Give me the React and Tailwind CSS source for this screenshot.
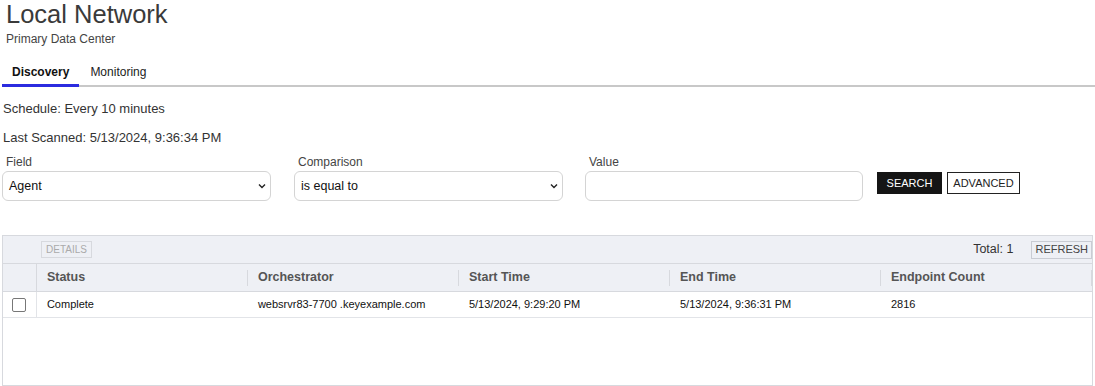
import React from 'react'

const columns = ['Status', 'Orchestrator', 'Start Time', 'End Time', 'Endpoint Count']

const rows = [
  {
    status: 'Complete',
    orchestrator: 'websrvr83-7700 .keyexample.com',
    start: '5/13/2024, 9:29:20 PM',
    end: '5/13/2024, 9:36:31 PM',
    count: '2816'
  }
]

const Chevron = () => (
  <svg width="8" height="8" viewBox="0 0 8 8" className="text-[#222]">
    <path d="M1 2.5 L4 5.5 L7 2.5" fill="none" stroke="currentColor" strokeWidth="1.4" />
  </svg>
)

const SelectBox = ({ label, value }) => (
  <div className="flex flex-col w-[269px]">
    <span className="text-[12px] text-[#444] pl-1 mb-[2px] leading-[14px]">{label}</span>
    <div className="h-[30px] border border-[#d4d4d4] rounded-[6px] flex items-center justify-between pl-[6px] pr-[4px] bg-white">
      <span className="text-[12.5px] text-[#111]">{value}</span>
      <Chevron />
    </div>
  </div>
)

export default function App() {
  return (
    <div className="w-[1095px] h-[386px] bg-white overflow-hidden font-['Liberation_Sans',Arial,sans-serif] text-[#333]">
      <div className="pl-[6px]">
        <h1 className="text-[25.5px] leading-[26px] text-[#3a3a3a] pt-[1px]">Local Network</h1>
        <p className="text-[12px] text-[#444] mt-[5px] leading-[14px]">Primary Data Center</p>
      </div>

      <div className="mt-[17px] flex items-end border-b-2 border-[#c8c8c8] ml-[2px]">
        <div className="px-[10px] pb-[3px] border-b-[3px] border-[#2b2bdf] -mb-[2px] text-[12px] font-bold text-[#111]">Discovery</div>
        <div className="px-[11px] pb-[4px] text-[12px] text-[#222]">Monitoring</div>
      </div>

      <div className="pl-[3px] text-[13px] text-[#333]">
        <p className="mt-[14px] leading-[16px]">Schedule: Every 10 minutes</p>
        <p className="mt-[13px] leading-[16px]">Last Scanned: 5/13/2024, 9:36:34 PM</p>
      </div>

      <div className="flex items-end mt-[9px] pl-[2px]">
        <SelectBox label="Field" value="Agent" />
        <div className="w-[23px]" />
        <SelectBox label="Comparison" value="is equal to" />
        <div className="w-[22px]" />
        <div className="flex flex-col w-[278px]">
          <span className="text-[12px] text-[#444] pl-1 mb-[2px] leading-[14px]">Value</span>
          <div className="h-[30px] border border-[#d4d4d4] rounded-[6px] bg-white" />
        </div>
        <div className="flex gap-[5px] ml-[14px] mb-[7px]">
          <button className="h-[22px] w-[65px] bg-[#151515] text-white text-[11px]">SEARCH</button>
          <button className="h-[22px] w-[73px] border border-[#222] bg-white text-[#222] text-[11px]">ADVANCED</button>
        </div>
      </div>

      <div className="mt-[34px] mx-[2px] border border-[#d7d9de] h-[151px] flex flex-col">
        <div className="h-[28px] bg-[#eef0f5] flex items-center justify-between pl-[38px] border-b border-[#d7d9de]">
          <span className="h-[17px] px-[4px] border border-[#d7d9de] text-[10px] text-[#aaa] flex items-center">DETAILS</span>
          <div className="flex items-center">
            <span className="text-[12.5px] text-[#333] mr-[18px]">Total: 1</span>
            <span className="h-[18px] px-[3px] border border-[#c9ccd3] text-[11px] text-[#444] flex items-center">REFRESH</span>
          </div>
        </div>
        <div className="h-[28px] bg-[#eef0f5] flex border-b border-[#d7d9de]">
          <div className="w-[34px] border-r border-[#d7d9de]" />
          {columns.map((c) => (
            <div key={c} className="w-[211.6px] flex items-center pl-[10px] text-[12.5px] font-bold text-[#555] relative">
              {c}
              <span className="absolute right-0 top-[6px] h-[16px] w-px bg-[#d7d9de]" />
            </div>
          ))}
        </div>
        {rows.map((r) => (
          <div key={r.orchestrator} className="h-[26px] flex border-b border-[#e2e4e8] text-[11px] text-[#111]">
            <div className="w-[34px] flex items-center justify-center border-r border-[#e2e4e8]">
              <span className="w-[14px] h-[14px] border border-[#777] rounded-[2px] bg-white" />
            </div>
            <div className="w-[211.6px] flex items-center pl-[10px]">{r.status}</div>
            <div className="w-[211.6px] flex items-center pl-[10px]">{r.orchestrator}</div>
            <div className="w-[211.6px] flex items-center pl-[10px]">{r.start}</div>
            <div className="w-[211.6px] flex items-center pl-[10px]">{r.end}</div>
            <div className="w-[211.6px] flex items-center pl-[10px]">{r.count}</div>
          </div>
        ))}
      </div>
    </div>
  )
}
